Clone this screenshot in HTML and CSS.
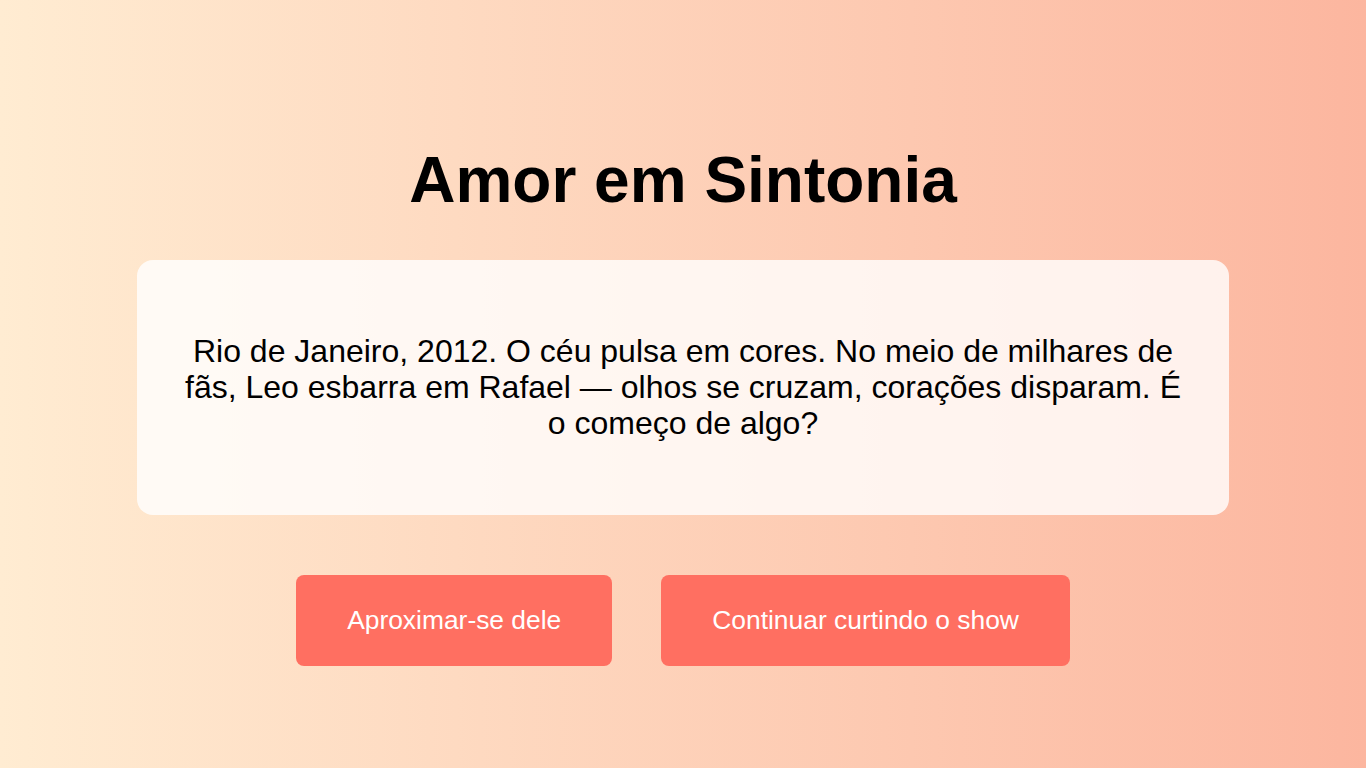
FILE: index.html
```html
<!DOCTYPE html>
<html lang="pt-BR">
<head>
<meta charset="utf-8">
<title>Amor em Sintonia</title>
<link rel="stylesheet" href="styles.css">
</head>
<body>
<main class="page">
  <h1 class="title">Amor em Sintonia</h1>
  <section class="story">
    <p class="story-text">Rio de Janeiro, 2012. O céu pulsa em cores. No meio de milhares de fãs, Leo esbarra em Rafael — olhos se cruzam, corações disparam. É o começo de algo?</p>
  </section>
  <div class="choices">
    <button class="choice">Aproximar-se dele</button>
    <button class="choice">Continuar curtindo o show</button>
  </div>
</main>
</body>
</html>
```

FILE: styles.css
```css
html, body {
  margin: 0;
  padding: 0;
}
body {
  min-height: 100vh;
  background: linear-gradient(to right, #ffecd2, #fcb69f);
  font-family: "Liberation Sans", Arial, sans-serif;
  color: #000;
}
.page {
  display: flex;
  flex-direction: column;
  align-items: center;
  padding-top: 143px;
}
.title {
  margin: 0;
  font-size: 64px;
  font-weight: bold;
  line-height: 74px;
}
.story {
  box-sizing: border-box;
  width: 80%;
  margin-top: 43px;
  padding: 73px 40px 74px;
  background: rgba(255, 255, 255, 0.8);
  border-radius: 16px;
  text-align: center;
}
.story-text {
  margin: 0;
  font-size: 32px;
  line-height: 36px;
}
.choices {
  display: flex;
  gap: 49px;
  margin-top: 60px;
}
.choice {
  border: none;
  border-radius: 8px;
  background: #ff6f61;
  color: #fff;
  font-family: "Liberation Sans", Arial, sans-serif;
  font-size: 26.4px;
  line-height: 31px;
  padding: 30px 51px;
  cursor: pointer;
}
```
